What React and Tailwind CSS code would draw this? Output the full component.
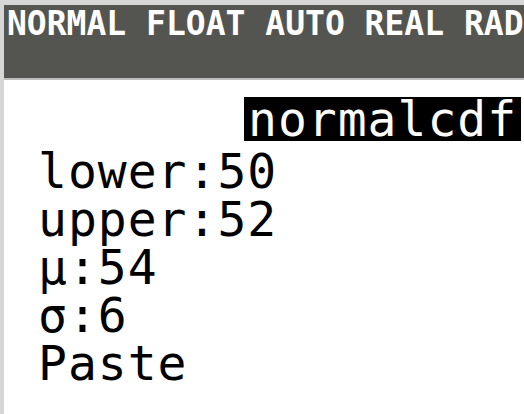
export default function App() {
  const rows = ["lower:50", "upper:52", "μ:54", "σ:6", "Paste"];

  return (
    <div className="w-[524px] h-[414px] overflow-hidden bg-[#d6d6d6] pt-[5px] pl-[4px] flex flex-col font-['DejaVu_Sans_Mono',monospace]">
      {/* status bar */}
      <div className="h-[73px] bg-[#545551] text-white pl-[3px] pt-[2px] text-[33px] leading-[34px] font-bold whitespace-nowrap overflow-hidden">
        NORMAL FLOAT AUTO REAL RADIAN MP
      </div>
      <div className="h-[2px] bg-[#bdbdbd]" />

      {/* normalcdf menu */}
      <div className="flex-1 bg-white pl-[34px] pt-[17px] text-black text-[48px] leading-[48px] tracking-[1px]">
        <div className="flex">
          <span className="ml-[206px] bg-black text-white px-[4px] h-[44px] leading-[44px]">normalcdf</span>
        </div>
        <div className="mt-[6px]">
          {rows.map((r) => (
            <div key={r} className="whitespace-nowrap">{r}</div>
          ))}
        </div>
      </div>
    </div>
  );
}
